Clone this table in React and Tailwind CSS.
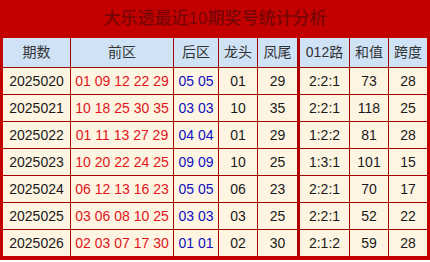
import React from "react";

const ROWS = [
  ["2025020", "01 09 12 22 29", "05 05", "01", "29", "2:2:1", "73", "28"],
  ["2025021", "10 18 25 30 35", "03 03", "10", "35", "2:2:1", "118", "25"],
  ["2025022", "01 11 13 27 29", "04 04", "01", "29", "1:2:2", "81", "28"],
  ["2025023", "10 20 22 24 25", "09 09", "10", "25", "1:3:1", "101", "15"],
  ["2025024", "06 12 13 16 23", "05 05", "06", "23", "2:2:1", "70", "17"],
  ["2025025", "03 06 08 10 25", "03 03", "03", "25", "2:2:1", "52", "22"],
  ["2025026", "02 03 07 17 30", "01 01", "02", "30", "2:1:2", "59", "28"],
];

const HEADERS = ["期数", "前区", "后区", "龙头", "凤尾", "012路", "和值", "跨度"];

const cols = "grid grid-cols-[67px_102px_44px_38px_39px_51px_38px_38px] gap-px";

export default function App() {
  return (
    <div className="w-[430px] h-[262px] bg-white" style={{ fontFamily: '"Liberation Sans", "Noto Sans CJK SC", sans-serif' }}>
      <div className="bg-[#c30000] px-[3px] pb-[4px]">
        <div className="h-[38px] flex items-center justify-center text-[17px] font-medium text-[#780505]">
          大乐透最近10期奖号统计分析
        </div>
        <div className="bg-[#a30000] flex flex-col gap-px">
          <div className={`${cols} h-[29px]`}>
            {HEADERS.map((h, i) => (
              <div
                key={h}
                className={`bg-[#cfe2f6] flex items-center justify-center text-[14px] text-[#333] ${i === 5 ? "border-l-2 border-[#b00000]" : ""}`}
              >
                {h}
              </div>
            ))}
          </div>
          {ROWS.map((r) => (
            <div key={r[0]} className={`${cols} h-[26px]`}>
              {r.map((v, i) => (
                <div
                  key={i}
                  className={`bg-[#fdf5e2] flex items-center justify-center text-[14px] ${
                    i === 1 ? "text-[#e3141b]" : i === 2 ? "text-[#1010c0]" : "text-[#1a1a1a]"
                  } ${i === 5 ? "border-l-2 border-[#b00000]" : ""}`}
                >
                  {v}
                </div>
              ))}
            </div>
          ))}
        </div>
      </div>
    </div>
  );
}
